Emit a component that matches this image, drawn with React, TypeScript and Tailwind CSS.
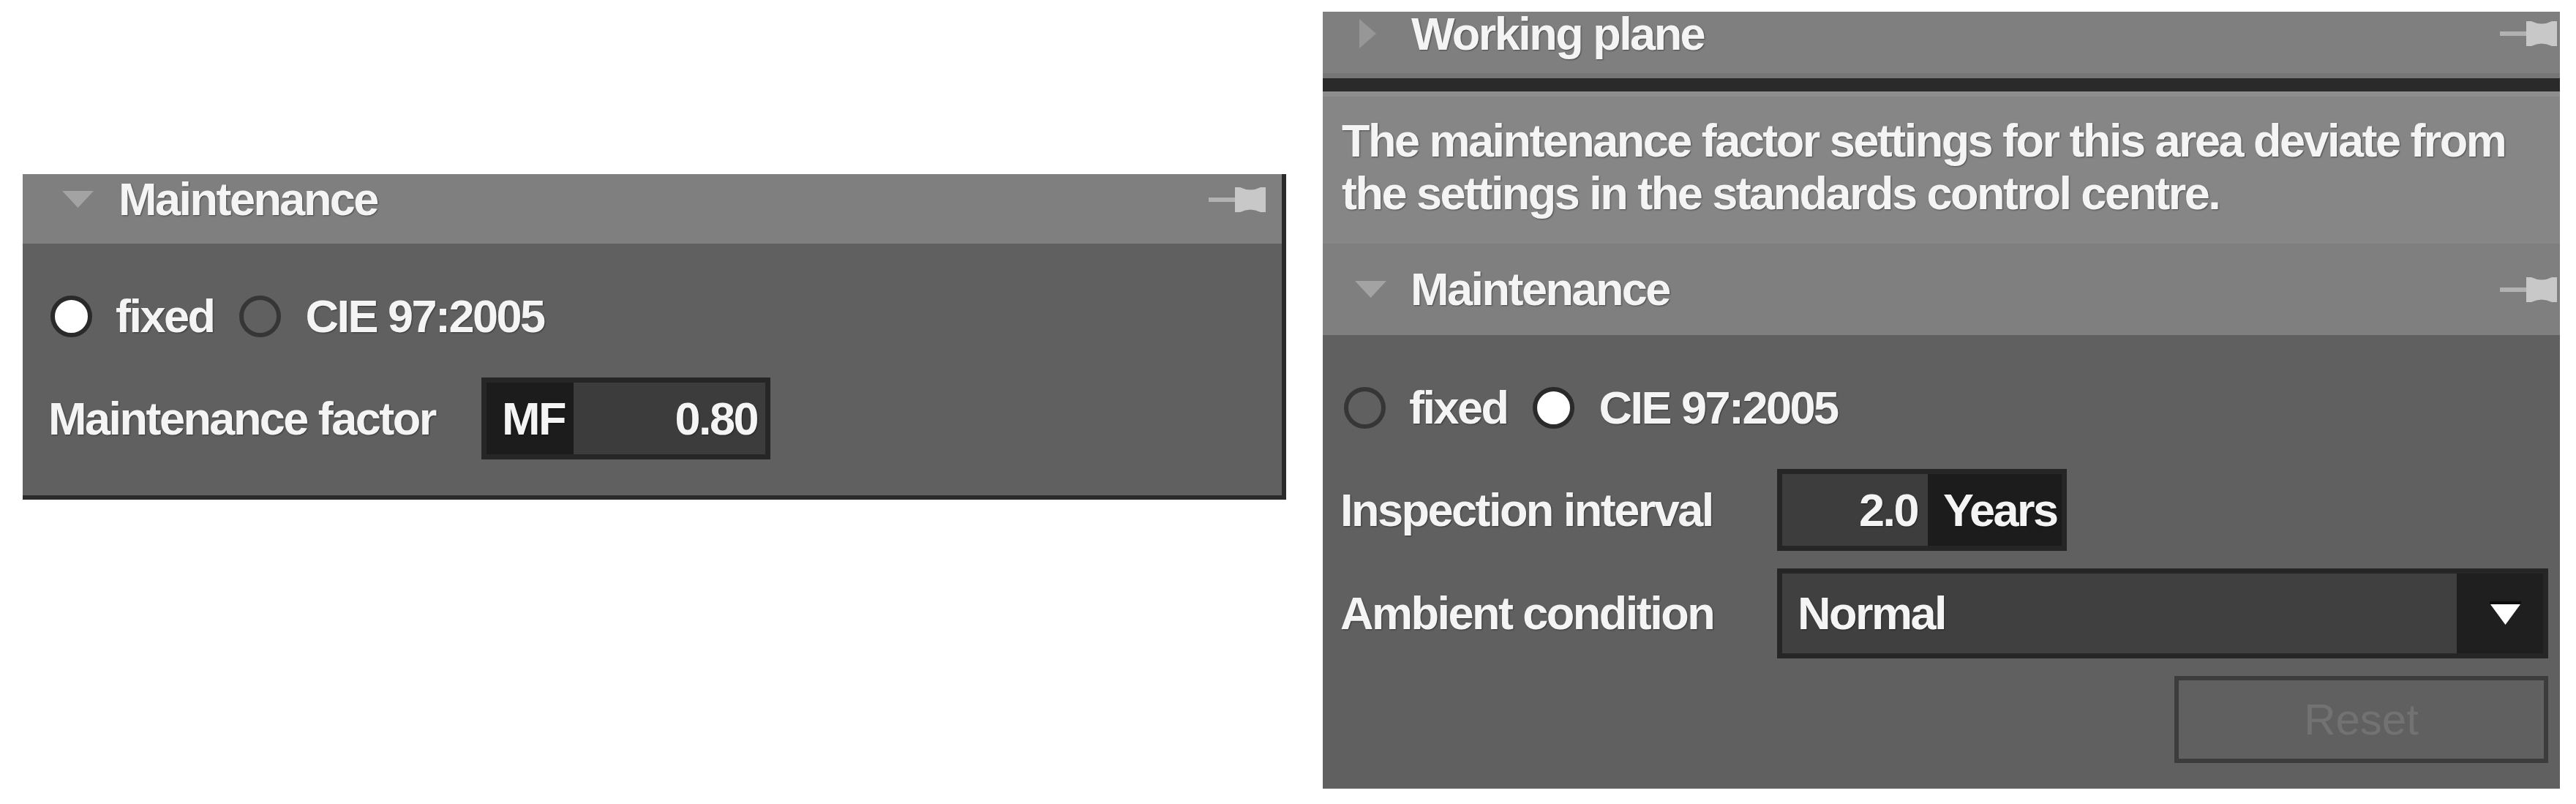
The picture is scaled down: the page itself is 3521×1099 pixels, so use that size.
import React from 'react';

const ink =
  'text-[63px] font-bold tracking-[-0.04em] text-[#f4f4f4] whitespace-nowrap [text-shadow:1px_1px_2px_rgba(0,0,0,0.45)]';
const label = ink + ' leading-none';

function Pin() {
  return (
    <svg width="78" height="34" viewBox="0 0 78 34" className="shrink-0 opacity-90">
      <rect x="0" y="14" width="38" height="6" fill="#b8b8b8" />
      <path d="M36 0 H43 Q57 7 71 0 H78 V34 H71 Q57 27 43 34 H36 Z" fill="#d0d0d0" />
    </svg>
  );
}

function TriangleDown() {
  return (
    <svg width="43" height="23" viewBox="0 0 43 23" className="shrink-0">
      <polygon points="0,0 43,0 21.5,23" fill="#a3a3a3" />
    </svg>
  );
}

function TriangleRight() {
  return (
    <svg width="23" height="40" viewBox="0 0 23 40" className="shrink-0">
      <polygon points="0,0 23,20 0,40" fill="#979797" />
    </svg>
  );
}

function Radio({ checked }: { checked: boolean }) {
  return checked ? (
    <span className="w-[57px] h-[57px] shrink-0 rounded-full border-[6px] border-[#2a2a2a] bg-white" />
  ) : (
    <span className="w-[57px] h-[57px] shrink-0 rounded-full border-[6px] border-[#363636]" />
  );
}

function RadioRow({ fixed }: { fixed: boolean }) {
  return (
    <div className="flex items-center h-[62px]">
      <Radio checked={fixed} />
      <span className={label + ' ml-[32px]'}>fixed</span>
      <span className="ml-[35px] flex">
        <Radio checked={!fixed} />
      </span>
      <span className={label + ' ml-[33px]'}>CIE 97:2005</span>
    </div>
  );
}

function LeftPanel() {
  return (
    <div className="mt-[238px] ml-[31px] w-[1727px] shrink-0 flex flex-col border-r-[6px] border-b-[6px] border-[#2b2b2b]">
      <div className="h-[95px] bg-[#7f7f7f] flex items-center pb-[26px]">
        <span className="ml-[54px] flex">
          <TriangleDown />
        </span>
        <span className={label + ' ml-[34px]'}>Maintenance</span>
        <span className="ml-auto mr-[22px] flex">
          <Pin />
        </span>
      </div>

      <div className="h-[344px] bg-[#606060] flex flex-col pt-[68px]">
        <div className="pl-[38px]">
          <RadioRow fixed={true} />
        </div>
        <div className="mt-[53px] pl-[35px] flex items-center h-[112px]">
          <span className={label + ' w-[592px]'}>Maintenance factor</span>
          <div className="w-[395px] h-[112px] flex border-[7px] border-[#262626] bg-[#1c1c1c]">
            <div className="w-[119px] pl-[21px] flex items-center">
              <span className={label}>MF</span>
            </div>
            <div className="flex-1 bg-[#3c3c3c] flex items-center justify-end pr-[11px]">
              <span className={label}>0.80</span>
            </div>
          </div>
        </div>
      </div>
    </div>
  );
}

function RightPanel() {
  return (
    <div className="mt-[16px] ml-[50px] w-[1691px] h-[1062px] shrink-0 flex flex-col">
      <div className="h-[84px] bg-[#7f7f7f] flex items-center pb-[24px]">
        <span className="ml-[50px] flex">
          <TriangleRight />
        </span>
        <span className={label + ' ml-[48px]'}>Working plane</span>
        <span className="ml-auto mr-[4px] flex">
          <Pin />
        </span>
      </div>
      <div className="h-[7px] bg-[#767676]" />
      <div className="h-[18px] bg-[#2a2a2a]" />
      <div className="h-[7px] bg-[#8e8e8e]" />

      <div className="h-[201px] bg-[#868686] pl-[26px] pt-[24px]">
        <p className={ink + ' leading-[72px]'}>
          The maintenance factor settings for this area deviate from
          <br />
          the settings in the standards control centre.
        </p>
      </div>

      <div className="h-[125px] bg-[#7f7f7f] flex items-center">
        <span className="ml-[44px] flex">
          <TriangleDown />
        </span>
        <span className={label + ' ml-[33px]'}>Maintenance</span>
        <span className="ml-auto mr-[4px] flex">
          <Pin />
        </span>
      </div>

      <div className="flex-1 bg-[#606060] flex flex-col pt-[68px] pr-[16px]">
        <div className="pl-[29px]">
          <RadioRow fixed={false} />
        </div>

        <div className="mt-[53px] pl-[24px] flex items-center h-[112px]">
          <span className={label + ' w-[597px]'}>Inspection interval</span>
          <div className="w-[396px] h-[112px] flex border-[7px] border-[#262626] bg-[#1c1c1c]">
            <div className="w-[199px] bg-[#3d3d3d] flex items-center justify-end pr-[14px]">
              <span className={label}>2.0</span>
            </div>
            <div className="flex-1 flex items-center pl-[21px]">
              <span className={label}>Years</span>
            </div>
          </div>
        </div>

        <div className="mt-[24px] pl-[24px] flex items-center h-[123px]">
          <span className={label + ' w-[597px]'}>Ambient condition</span>
          <div className="flex-1 h-[123px] flex border-[7px] border-[#262626] bg-[#1f1f1f]">
            <div className="flex-1 bg-[#404040] flex items-center pl-[21px]">
              <span className={label}>Normal</span>
            </div>
            <div className="w-[118px] flex items-center justify-center pl-[14px]">
              <svg width="43" height="34" viewBox="0 0 43 34">
                <rect x="0" y="0" width="43" height="4" fill="#0e0e0e" />
                <polygon points="1,4 42,4 21.5,32" fill="#ffffff" />
              </svg>
            </div>
          </div>
        </div>

        <div className="mt-[24px] flex justify-end">
          <button className="w-[511px] h-[119px] border-[6px] border-[#3c3c3c] bg-[#606060] flex items-center justify-center">
            <span className="text-[60px] leading-none text-[#727272] whitespace-nowrap">Reset</span>
          </button>
        </div>
      </div>
    </div>
  );
}

export default function App() {
  return (
    <div className="w-[3521px] h-[1099px] bg-white overflow-hidden flex items-start font-['Liberation_Sans',Arial,sans-serif]">
      <LeftPanel />
      <RightPanel />
    </div>
  );
}
